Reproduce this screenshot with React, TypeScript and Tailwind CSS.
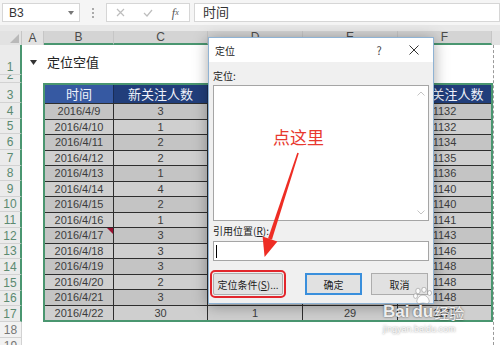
import React from "react";

const cols = [
  { k: "A", w: "w-[22px]", sel: false },
  { k: "B", w: "w-[70px]", sel: true },
  { k: "C", w: "w-[94px]", sel: true },
  { k: "D", w: "w-[95px]", sel: true },
  { k: "E", w: "w-[95px]", sel: true },
  { k: "F", w: "w-[94px]", sel: true },
];

const data = [
  ["2016/4/9", "3", "1", "2", "1132"],
  ["2016/4/10", "1", "1", "0", "1132"],
  ["2016/4/11", "2", "", "2", "1134"],
  ["2016/4/12", "2", "1", "1", "1135"],
  ["2016/4/13", "1", "", "1", "1136"],
  ["2016/4/14", "4", "", "4", "1140"],
  ["2016/4/15", "2", "2", "0", "1140"],
  ["2016/4/16", "1", "", "1", "1141"],
  ["2016/4/17", "3", "1", "2", "1143"],
  ["2016/4/18", "3", "", "3", "1146"],
  ["2016/4/19", "3", "1", "2", "1148"],
  ["2016/4/20", "2", "2", "0", "1148"],
  ["2016/4/21", "3", "3", "0", "1148"],
  ["2016/4/22", "30", "1", "29", "1177"],
];

const cellW = ["w-[69px]", "w-[94px]", "w-[95px]", "w-[95px]", "w-[93px]"];
const heads = ["时间", "新关注人数", "取消关注人数", "净增关注人数", "累积关注人数"];

const rowHeads = [
  { n: "1", h: "h-[30px]", sel: true },
  { n: "2", h: "h-[8px]", sel: true },
  { n: "3", h: "h-[20px]", sel: true },
  ...data.map((_, i) => ({ n: String(i + 4), h: "h-[15.64px]", sel: true })),
  { n: "18", h: "h-[16px]", sel: false },
  { n: "19", h: "h-[16px]", sel: false },
];

const Toolbar = () => (
  <div className="h-[25px] bg-[#f5f5f5] flex items-start pt-[3px]">
    <div className="ml-[2px] w-[78px] h-[19px] bg-white border border-[#d6d6d6] flex items-center justify-between pl-[6px] pr-[5px]">
      <span className="text-[12px] text-[#333]">B3</span>
      <svg width="6" height="4" viewBox="0 0 6 4">
        <path d="M0 0 L6 0 L3 4 Z" fill="#777" />
      </svg>
    </div>
    <div className="w-[26px] h-[19px] flex flex-col items-center justify-center gap-[2px]">
      <span className="w-[2px] h-[2px] bg-[#aaa]" />
      <span className="w-[2px] h-[2px] bg-[#aaa]" />
      <span className="w-[2px] h-[2px] bg-[#aaa]" />
    </div>
    <div className="w-[84px] h-[19px] bg-white border border-[#d6d6d6] flex items-center">
      <span className="w-[28px] flex justify-center">
        <svg width="9" height="9" viewBox="0 0 9 9">
          <path d="M1 1 L8 8 M8 1 L1 8" stroke="#bdbdbd" strokeWidth="1.2" />
        </svg>
      </span>
      <span className="w-[28px] flex justify-center">
        <svg width="10" height="8" viewBox="0 0 10 8">
          <path d="M1 4 L4 7 L9 1" stroke="#bdbdbd" strokeWidth="1.2" fill="none" />
        </svg>
      </span>
      <span className="w-[28px] flex justify-center font-['Liberation_Serif',serif] italic text-[12px] text-[#555]">
        f<span className="text-[8px] mt-[3px]">x</span>
      </span>
    </div>
    <div className="ml-[4px] flex-1 h-[19px] bg-white border border-[#d6d6d6] flex items-center pl-[8px]">
      <span className="text-[13px] text-[#333]">时间</span>
    </div>
  </div>
);

const ColHeaders = () => (
  <div className="flex h-[14px] bg-[#e2e2e2]">
    <div className="w-[22px] h-full border-r border-[#c6c6c6] flex items-end justify-end pr-[2px] pb-[2px]">
      <svg width="9" height="9" viewBox="0 0 9 9">
        <path d="M9 0 L9 9 L0 9 Z" fill="#b9b9b9" />
      </svg>
    </div>
    {cols.map((c) => (
      <div
        key={c.k}
        className={`${c.w} h-full border-r border-[#c6c6c6] flex items-center justify-center text-[12px] leading-none ${
          c.sel ? "bg-[#d4d4d4] border-b-2 border-b-[#4a9670] text-[#4b4b4b]" : "text-[#4b4b4b]"
        }`}
      >
        {c.k}
      </div>
    ))}
    <div className="flex-1 h-full" />
  </div>
);

const Dialog = () => (
  <div className="absolute left-[208px] top-[37px] w-[226px] h-[267px] border border-[#8fb3d4] bg-[#f0f0f0] shadow-[0_2px_14px_rgba(0,0,0,0.35)] flex flex-col font-['Noto_Sans_CJK_SC','Liberation_Sans',sans-serif] text-[#222]">
    <div className="h-[24px] bg-white flex items-center pl-[6px] text-[10px]">
      <span>定位</span>
      <span className="ml-auto w-[10px] text-center text-[11px] text-[#444]">?</span>
      <span className="ml-[25px] mr-[14px] flex">
        <svg width="10" height="10" viewBox="0 0 10 10">
          <path d="M0.5 0.5 L9.5 9.5 M9.5 0.5 L0.5 9.5" stroke="#333" strokeWidth="1" />
        </svg>
      </span>
    </div>
    <div className="px-[4px] pt-[7px] flex flex-col text-[10px]">
      <div className="h-[13px] leading-[13px]">定位:</div>
      <div className="mt-[3px] h-[136px] bg-white border border-[#a5a5a5] flex">
        <div className="flex-1" />
        <div className="w-[15px] flex flex-col items-center justify-between py-[5px]">
          <svg width="8" height="5" viewBox="0 0 8 5">
            <path d="M0.5 4.5 L4 1 L7.5 4.5" stroke="#c4c4c4" fill="none" />
          </svg>
          <svg width="8" height="5" viewBox="0 0 8 5">
            <path d="M0.5 0.5 L4 4 L7.5 0.5" stroke="#c4c4c4" fill="none" />
          </svg>
        </div>
      </div>
      <div className="mt-[3px] h-[13px] leading-[13px]">
        引用位置(<span className="underline">R</span>):
      </div>
      <div className="mt-[4px] h-[20px] bg-white border border-[#a5a5a5] flex items-center">
        <span className="ml-[2px] w-px h-[13px] bg-black" />
      </div>
      <div className="mt-[12px] flex h-[22px]">
        <div className="w-[70px] h-full bg-[#e1e1e1] border border-[#adadad] rounded-[2px] outline-2 outline-[#e2262c] outline-offset-[1px] flex items-center justify-center">
          定位条件(<span className="underline">S</span>)...
        </div>
        <div className="ml-[22px] w-[57px] h-full bg-[#e1e1e1] border-2 border-[#3a8fdc] flex items-center justify-center">
          确定
        </div>
        <div className="ml-[9px] w-[57px] h-full bg-[#e1e1e1] border border-[#adadad] flex items-center justify-center">
          取消
        </div>
      </div>
    </div>
  </div>
);

const Annotation = () => (
  <>
    <div className="absolute left-[273px] top-[128px] text-[17px] leading-[17px] text-[#e8392f] font-['Noto_Sans_CJK_SC',sans-serif]">
      点这里
    </div>
    <svg className="absolute left-0 top-0 pointer-events-none" width="500" height="345" viewBox="0 0 500 345">
      <polygon points="297.3,152.8 298.8,153.2 272,239.6 268,238.4" fill="#ee2d24" />
      <polygon points="262.6,236.6 277.4,241.4 264.6,257" fill="#ee2d24" />
    </svg>
  </>
);

const Watermark = () => (
  <div className="absolute left-[383px] top-[287px] pointer-events-none font-['Liberation_Sans',sans-serif]">
    <svg className="ml-[30px]" width="20" height="18" viewBox="0 0 20 18">
      <g fill="rgba(255,255,255,0.85)" stroke="rgba(110,110,110,0.6)" strokeWidth="0.7">
        <ellipse cx="5" cy="4" rx="2.2" ry="2.8" />
        <ellipse cx="11" cy="2.8" rx="2.2" ry="2.6" />
        <ellipse cx="16.5" cy="6" rx="2" ry="2.5" />
        <ellipse cx="2.5" cy="9" rx="2" ry="2.4" />
        <path d="M10 8 C14 8 17 13 16 15.5 C15 17.5 12 16 10 16 C8 16 5 17.5 4 15.5 C3 13 6 8 10 8 Z" />
      </g>
    </svg>
    <div className="flex items-end -mt-[2px] leading-none">
      <span className="text-[17px] font-bold text-white/90 [text-shadow:0_0_2px_rgba(0,0,0,0.7)]">Bai</span>
      <span className="ml-[3px] text-[17px] font-bold text-white/90 [text-shadow:0_0_2px_rgba(0,0,0,0.7)]">du</span>
      <span className="ml-[1px] text-[15px] text-white/90 font-['Noto_Sans_CJK_SC',sans-serif] [text-shadow:0_0_2px_rgba(0,0,0,0.7)]">经验</span>
    </div>
    <div className="mt-[3px] text-[9px] text-white/90 [text-shadow:0_0_2px_rgba(0,0,0,0.5)]">jingyan.baidu.com</div>
  </div>
);

export default function App() {
  return (
    <div className="relative w-[500px] h-[345px] overflow-hidden bg-white font-['Liberation_Sans','Noto_Sans_CJK_SC',sans-serif]">
      <Toolbar />
      <div className="h-[6px] bg-[#e8e8e8]" />
      <ColHeaders />
      <div className="flex">
        <div className="w-[22px] flex flex-col">
          {rowHeads.map((r) => (
            <div
              key={r.n}
              className={`${r.h} shrink-0 overflow-hidden flex items-end justify-center text-[12px] leading-[14px] border-b border-b-[#d2d2d2] ${
                r.sel
                  ? "bg-[#ebebeb] text-[#5b8a71] border-r-2 border-r-[#4a9670]"
                  : "bg-[#f2f2f2] text-[#777] border-r border-r-[#d2d2d2]"
              }`}
            >
              {r.n}
            </div>
          ))}
        </div>
        <div className="relative flex-1">
          <div className="h-[30px] flex items-center pl-[8px] pt-[4px] text-[13px] text-[#222]">
            <svg width="7" height="5" viewBox="0 0 7 5">
              <path d="M0 0 L7 0 L3.5 5 Z" fill="#333" />
            </svg>
            <span className="ml-[10px] font-['Noto_Sans_CJK_SC',sans-serif]">定位空值</span>
          </div>
          <div className="h-[8px]" />
          <div className="ml-[21px] w-[450px] border-2 border-[#4a9670]">
            <div className="flex h-[18px]">
              {heads.map((h, i) => (
                <div
                  key={h}
                  className={`${cellW[i]} h-full flex items-center justify-center text-[13px] text-[#eef2fa] font-['Noto_Sans_CJK_SC',sans-serif] ${
                    i === 0 ? "bg-[#3659a2]" : "bg-[#213e7b]"
                  } ${i < 4 ? "border-r border-[#1a2d55]" : ""}`}
                >
                  {h}
                </div>
              ))}
            </div>
            {data.map((row, ri) => (
              <div
                key={row[0]}
                className={`flex h-[15.5px] border-t border-[#2e2e2e] ${ri % 2 === 0 ? "bg-[#c4c4c4]" : "bg-[#cfcfcf]"}`}
              >
                {row.map((v, ci) => (
                  <div
                    key={ci}
                    className={`${cellW[ci]} relative h-full flex items-center justify-center text-[11px] text-[#3c3c3c] ${
                      ci < 4 ? "border-r border-[#2e2e2e]" : ""
                    }`}
                  >
                    {v}
                    {ri === 8 && ci === 0 && (
                      <span className="absolute right-0 top-0 w-0 h-0 border-t-[6px] border-l-[6px] border-t-[#9b1030] border-l-transparent" />
                    )}
                  </div>
                ))}
              </div>
            ))}
          </div>
          <div className="absolute left-[471px] top-0 h-[300px] border-l border-dashed border-[#9a9a9a]" />
        </div>
      </div>
      <Dialog />
      <Annotation />
      <Watermark />
    </div>
  );
}
